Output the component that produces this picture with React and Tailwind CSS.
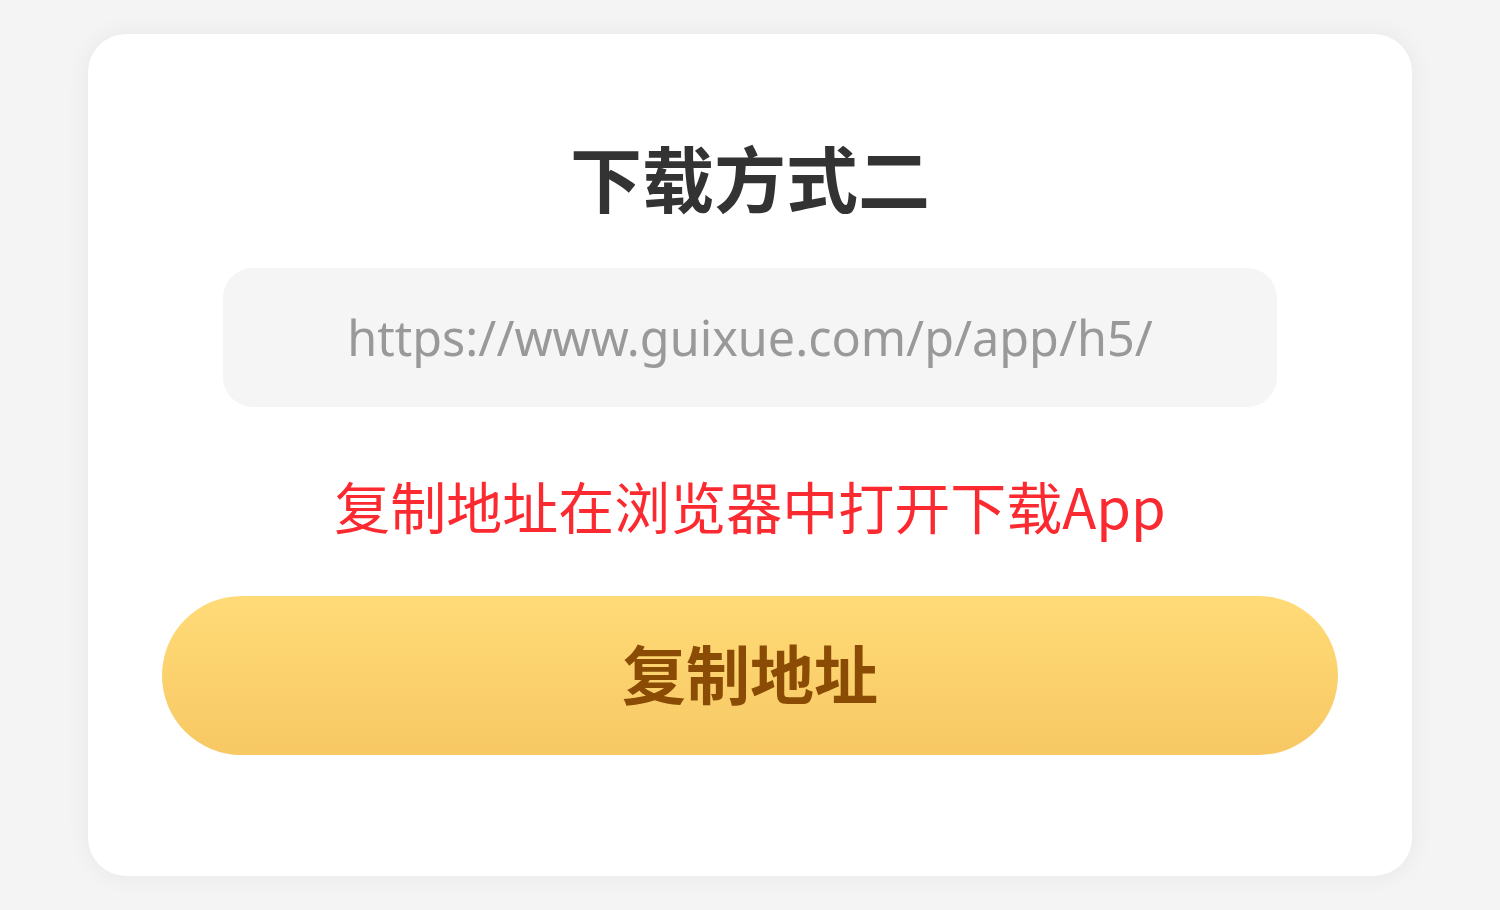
import React from "react";

const CJK = "font-['Noto_Sans_CJK_SC',sans-serif]";

export default function App() {
  return (
    <div className="min-h-screen bg-[#f4f4f4] pt-[34px] pb-[34px]">
      <div className="mx-auto w-[1324px] h-[842px] bg-white rounded-[38px] shadow-[0_0_24px_rgba(0,0,0,0.06)] flex flex-col items-center pt-[106px]">
        <h1 className={`${CJK} text-[72px] leading-[72px] font-bold text-[#333333]`}>下载方式二</h1>

        <div className="mt-[56px] w-[1054px] h-[139px] bg-[#f5f5f5] rounded-[30px] flex items-center justify-center">
          <span className="font-['Noto_Sans',sans-serif] text-[48.5px] leading-none text-[#999999]">
            https://www.guixue.com/p/app/h5/
          </span>
        </div>

        <p className={`${CJK} mt-[70px] text-[56px] leading-[56px] text-[#fb2a30]`}>复制地址在浏览器中打开下载App</p>

        <button className="mt-[63px] w-[1176px] h-[159px] rounded-full bg-gradient-to-b from-[#ffdb77] to-[#f7c864] flex items-center justify-center pb-[10px]">
          <span className={`${CJK} text-[64px] leading-none font-bold text-[#8a4c05]`}>复制地址</span>
        </button>
      </div>
    </div>
  );
}
